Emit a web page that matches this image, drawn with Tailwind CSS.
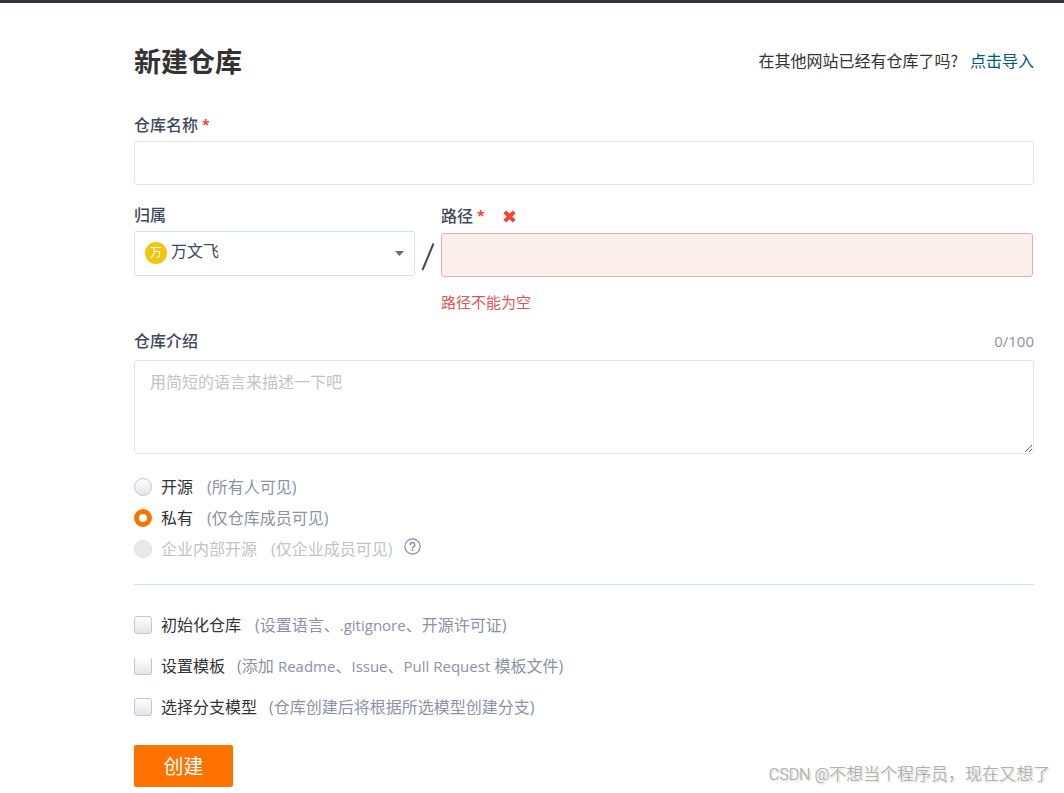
<!DOCTYPE html>
<html lang="zh-CN">
<head>
<meta charset="utf-8">
<meta name="viewport" content="width=device-width, initial-scale=1">
<title>新建仓库</title>
<script src="https://cdn.jsdelivr.net/npm/@tailwindcss/browser@4"></script>
</head>
<body class="relative min-h-screen bg-white border-t-[3px] border-[#2f3342] font-['Open_Sans','Noto_Sans_CJK_SC',sans-serif] text-[16px] leading-6 text-[#333333]">
<main class="pl-[134px] pr-[30px] pt-[43px] pb-[6px]">
  <header class="flex items-center justify-between">
    <h1 class="text-[27px] leading-8 font-bold">新建仓库</h1>
    <p class="flex gap-3 pb-1 font-['Noto_Sans_CJK_SC',sans-serif]"><span>在其他网站已经有仓库了吗?</span><a href="#" class="text-[#005980]">点击导入</a></p>
  </header>

  <form class="mt-[35px]">
    <label for="name" class="flex h-6 items-center font-medium text-[#40485b]">仓库名称<span class="ml-1 text-[14px] font-bold text-[#f44336]">*</span></label>
    <input id="name" type="text" class="mt-1 block h-11 w-full rounded-[3px] border border-[#e3e3ea] px-4 outline-none">

    <div class="mt-[18px] flex items-start">
      <div class="w-[281px] shrink-0">
        <label for="owner" class="block font-medium text-[#40485b]">归属</label>
        <div class="relative mt-1">
          <select id="owner" class="block h-[45px] w-full appearance-none rounded-[2px] border border-[#dce3e8] bg-white pl-9 pb-[6px] text-[#40485b] outline-none">
            <option>万文飞</option>
          </select>
          <span class="pointer-events-none absolute left-[11px] top-[11px] flex size-[22px] items-center justify-center rounded-full bg-[#f2c511] text-[12px] leading-none text-white">万</span>
          <svg class="pointer-events-none absolute right-[11px] top-5 h-[5px] w-[9px]" viewBox="0 0 9 5"><path d="M0 0h9L4.500 5z" fill="#646b7b"/></svg>
        </div>
      </div>
      <svg class="mx-[6px] mt-[40px] h-[28px] w-[14px] shrink-0" viewBox="0 0 14 28"><path d="M12.500 0.500L1.500 27" stroke="#40485b" stroke-width="2" fill="none"/></svg>
      <div class="mr-px mt-px grow">
        <label for="path" class="flex h-6 items-center font-medium text-[#40485b]">路径<span class="ml-1 text-[14px] font-bold text-[#f44336]">*</span>
          <svg class="ml-[18px] size-[13px]" viewBox="0 0 13 13"><path d="M1.800 1.800l9.400 9.400M11.200 1.800l-9.400 9.400" stroke="#f44336" stroke-width="4"/></svg>
        </label>
        <input id="path" type="text" aria-describedby="path-error" class="mt-[5px] block h-11 w-full rounded-[3px] border border-[#dfb0b1] bg-[#fdefee] px-4 outline-none">
        <p id="path-error" class="mt-[13px] text-[15px] text-[#db5858]">路径不能为空</p>
      </div>
    </div>

    <div class="mt-[15px] flex items-center justify-between">
      <label for="intro" class="font-medium text-[#40485b]">仓库介绍</label>
      <span class="text-[15px] text-[#8c92a4]">0/100</span>
    </div>
    <textarea id="intro" placeholder="用简短的语言来描述一下吧" class="mt-[7px] block h-[94px] w-full resize rounded-[3px] border border-[#e3e3ea] px-[15px] py-[9px] outline-none placeholder:text-[#c3c3c3]"></textarea>

    <fieldset class="mt-[17px]">
      <label class="flex h-[31px] items-center"><input type="radio" name="scope" class="size-[18px] appearance-none rounded-full border border-[#c4c6ce] bg-linear-to-b from-white to-[#e2e4ec]"><span class="ml-[9px]">开源</span><span class="ml-[14px] text-[#8c92a4]">(所有人可见)</span></label>
      <label class="flex h-[31px] items-center"><input type="radio" name="scope" checked class="size-[18px] appearance-none rounded-full border-[#fe7300] bg-white checked:border-[5px]"><span class="ml-[9px]">私有</span><span class="ml-[14px] text-[#8c92a4]">(仅仓库成员可见)</span></label>
      <div class="flex h-[31px] items-center">
        <label class="flex items-center text-[#c3c3c3]"><input type="radio" name="scope" disabled class="size-[18px] appearance-none rounded-full border border-[#dfdfdf] bg-[#e9e9e9]"><span class="ml-[9px]">企业内部开源</span><span class="ml-[14px]">(仅企业成员可见)</span></label>
        <button type="button" aria-label="帮助" class="mb-1 ml-3"><svg class="size-[17px]" viewBox="0 0 17 17" fill="none" stroke="#858ca3"><circle cx="8.500" cy="8.500" r="7.600" stroke-width="1.200"/><path d="M6.200 7a2.300 2.300 0 1 1 3.500 1.800c-.8.500-1.200.8-1.200 1.700" stroke-width="1.500"/><path d="M8.500 11.400v1.600" stroke-width="1.700"/></svg></button>
      </div>
    </fieldset>

    <hr class="mt-5 border-[#dce3e8]">

    <fieldset class="mt-[19px]">
      <label class="flex h-[41px] items-center"><input type="checkbox" class="size-[18px] appearance-none rounded-[3px] border border-[#c4c6ce] bg-linear-to-b from-white to-[#e2e4ec]"><span class="ml-[9px]">初始化仓库</span><span class="ml-[14px] text-[#8c92a4]">(设置语言、<span class="text-[15px]">.gitignore</span>、开源许可证)</span></label>
      <label class="flex h-[41px] items-center"><input type="checkbox" class="size-[18px] appearance-none rounded-[3px] border border-t-white border-[#c4c6ce] bg-linear-to-b from-white to-[#e2e4ec]"><span class="ml-[9px]">设置模板</span><span class="ml-3 text-[#8c92a4]">(添加 <span class="text-[15px]">Readme</span>、<span class="text-[15px]">Issue</span>、<span class="text-[15px]">Pull Request</span> 模板文件)</span></label>
      <label class="flex h-[41px] items-center"><input type="checkbox" class="size-[18px] appearance-none rounded-[3px] border border-[#c4c6ce] bg-linear-to-b from-white to-[#e2e4ec]"><span class="ml-[9px]">选择分支模型</span><span class="ml-3 text-[#8c92a4]">(仓库创建后将根据所选模型创建分支)</span></label>
    </fieldset>

    <button type="submit" class="mt-[18px] block h-[42px] w-[99px] rounded-[2px] bg-[#fe7300] pt-[2px] text-[20px] text-white">创建</button>
  </form>
</main>
<p class="absolute bottom-[6px] right-[14px] font-['Noto_Sans_CJK_SC',sans-serif] text-[17px] font-light text-[#a6a6a6] [text-shadow:1px_1px_0_#ffffff,1px_1px_1px_#777777]"><span class="font-['Roboto',sans-serif] text-[16px]">CSDN @</span>不想当个程序员，现在又想了</p>
</body>
</html>
